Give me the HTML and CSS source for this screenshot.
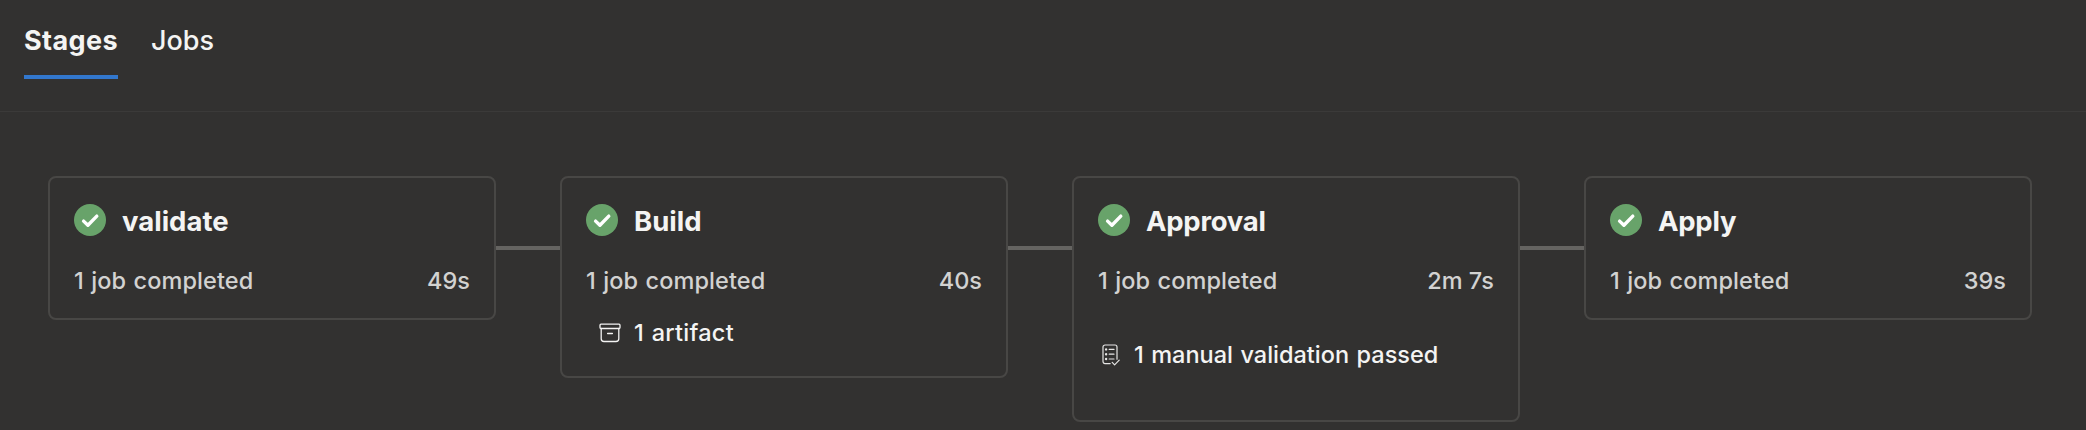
FILE: index.html
```
<!DOCTYPE html>
<html lang="en">
<head>
<meta charset="utf-8">
<title>Stages</title>
<link rel="stylesheet" href="styles.css">
</head>
<body>
<svg class="defs" width="0" height="0" aria-hidden="true">
  <symbol id="success" viewBox="0 0 32 32">
    <circle cx="16" cy="16" r="16" fill="#68a36a"/>
    <path d="M9.6 17.1l4.3 4.2 8.9-9.2" fill="none" stroke="#fff" stroke-width="3.4" stroke-linecap="round" stroke-linejoin="round"/>
  </symbol>
</svg>
<nav class="tabs">
  <a class="tab tab-active">Stages</a>
  <a class="tab">Jobs</a>
</nav>
<main class="pipeline">
  <section class="stage">
    <header class="stage-head"><svg class="status"><use href="#success"/></svg><h2 class="stage-name">validate</h2></header>
    <div class="summary"><span>1 job completed</span><span class="duration">49s</span></div>
  </section>
  <i class="connector"></i>
  <section class="stage stage-build">
    <header class="stage-head"><svg class="status"><use href="#success"/></svg><h2 class="stage-name">Build</h2></header>
    <div class="summary"><span>1 job completed</span><span class="duration">40s</span></div>
    <div class="detail detail-artifact">
      <svg class="artifact-icon" width="22" height="20" viewBox="0 0 22 20" fill="none" stroke="#f4f4f3" stroke-width="1.3" stroke-linecap="round">
        <rect x="1" y="1.2" width="20" height="4.3" rx="1"/>
        <path d="M2.2 5.5v10.2a2.8 2.8 0 0 0 2.8 2.8h12a2.8 2.8 0 0 0 2.8-2.8V5.5M8.6 10.5h4.8"/>
      </svg>
      <span>1 artifact</span>
    </div>
  </section>
  <i class="connector"></i>
  <section class="stage stage-approval">
    <header class="stage-head"><svg class="status"><use href="#success"/></svg><h2 class="stage-name stage-name-tight">Approval</h2></header>
    <div class="summary"><span>1 job completed</span><span class="duration">2m 7s</span></div>
    <div class="detail detail-validation">
      <svg class="validation-icon" width="18" height="22" viewBox="0 0 18 22" fill="none" stroke="#e6e6e5" stroke-width="1.2" stroke-linecap="round" stroke-linejoin="round">
        <path d="M8.2 19.6H3a2 2 0 0 1-2-2V3a2 2 0 0 1 2-2h10a2 2 0 0 1 2 2v12.2M7.2 5.4H12M7.2 10.2H12M7.2 15H12M10.2 18.4l2.4 2.5 4.6-4.7"/>
        <path d="M4.1 5.4h.01M4.1 10.2h.01M4.1 15h.01" stroke-width="2.4"/>
      </svg>
      <span>1 manual validation passed</span>
    </div>
  </section>
  <i class="connector"></i>
  <section class="stage">
    <header class="stage-head"><svg class="status"><use href="#success"/></svg><h2 class="stage-name stage-name-tight">Apply</h2></header>
    <div class="summary"><span>1 job completed</span><span class="duration">39s</span></div>
  </section>
</main>
</body>
</html>
```
FILE: styles.css
```
* { box-sizing: border-box; }
body {
  margin: 0;
  height: 430px;
  overflow: hidden;
  background: #323130;
  color: #f4f4f3;
  font-family: Inter, "Liberation Sans", sans-serif;
  font-weight: 450;
}
.defs { display: block; }
.tabs {
  display: flex;
  gap: 33px;
  height: 112px;
  padding: 0 24px;
  border-bottom: 1px solid #3b3a39;
}
.tab {
  height: 79px;
  padding-top: 24px;
  font-size: 27px;
  line-height: 33px;
}
.tab-active {
  font-weight: 700;
  letter-spacing: 0.39px;
  border-bottom: 4px solid #3277cd;
}
.pipeline {
  display: flex;
  align-items: flex-start;
  padding: 64px 48px 0;
}
.stage {
  flex: none;
  width: 448px;
  height: 144px;
  padding: 26px 24px 0;
  border: 2px solid #484745;
  border-radius: 8px;
}
.stage-build { height: 202px; }
.stage-approval { height: 246px; }
.connector {
  flex: none;
  width: 64px;
  height: 4px;
  margin-top: 70px;
  background: #656461;
}
.stage-head {
  display: flex;
  gap: 16px;
  height: 32px;
}
.status { width: 32px; height: 32px; flex: none; }
.stage-name {
  margin: 1px 0 0;
  font-size: 27.5px;
  font-weight: 700;
  line-height: 33px;
}
.stage-name-tight { letter-spacing: -0.25px; }
.summary {
  display: flex;
  justify-content: space-between;
  margin-top: 30px;
  font-size: 23.5px;
  line-height: 30px;
  letter-spacing: 0.1px;
  word-spacing: 1px;
  color: #d2d2d1;
}
.duration { letter-spacing: 0; word-spacing: 0; }
.detail {
  display: flex;
  font-size: 23.5px;
  line-height: 30px;
  word-spacing: 1.2px;
}
.detail-artifact { margin: 22px 0 0 13px; gap: 13px; }
.detail-artifact span { letter-spacing: 0.25px; }
.detail-validation { margin: 44px 0 0 4px; gap: 14px; }
.artifact-icon { margin-top: 5px; }
.validation-icon { margin-top: 4px; }
```
